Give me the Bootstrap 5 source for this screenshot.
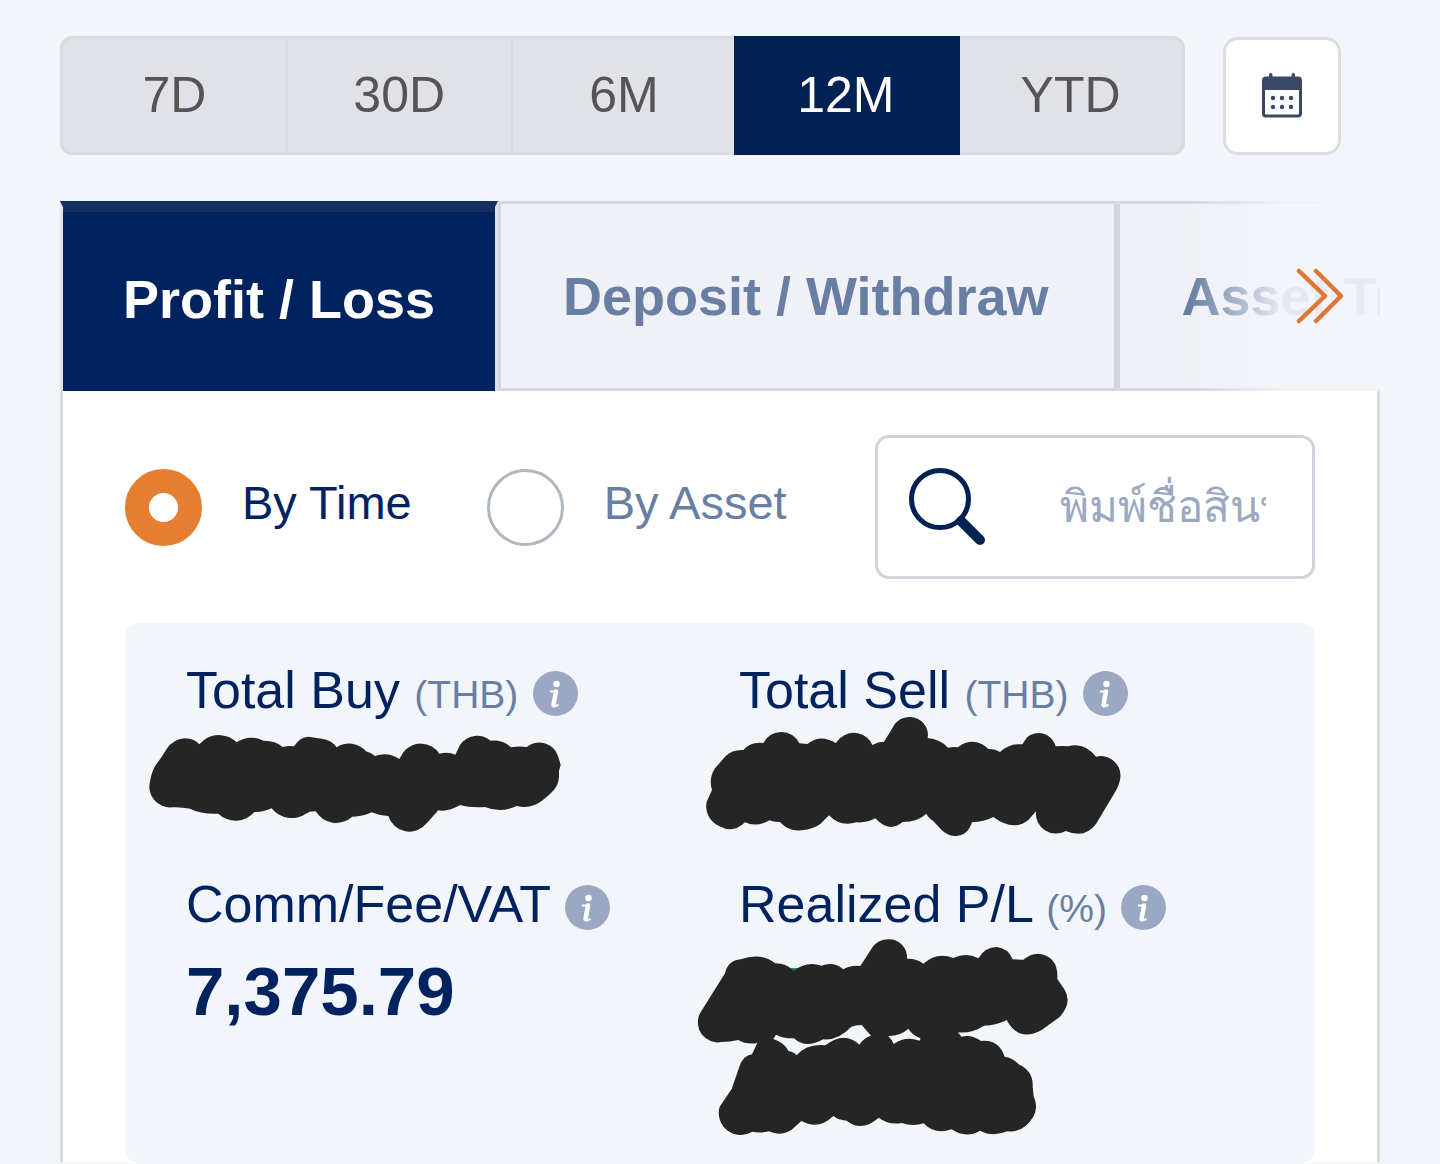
<!DOCTYPE html>
<html lang="en">
<head>
<meta charset="utf-8">
<meta name="viewport" content="width=device-width, initial-scale=1">
<title>Profit / Loss</title>
<link href="https://cdn.jsdelivr.net/npm/bootstrap@5.3.0/dist/css/bootstrap.min.css" rel="stylesheet">
<style>
:root { --navy: #00235f; --slate: #687fa3; --page: #f2f5fa; --line: #d2d7df; --orange: #e67e31; }
body { background: var(--page); color: var(--navy); font-family: "Liberation Sans", "Noto Sans", sans-serif; }
.page { padding: 36px 60px 0; }
.period-bar { gap: 38px; padding-right: 39px; margin-bottom: 46px; }
.period-group .btn { flex: 1 1 0; height: 119px; padding: 0 0 2px; font-size: 50px; line-height: 60px; color: #555; background: #e1e2e7; border: 3px solid #d9dbe0; border-radius: 12px; }
.period-group .btn:not(:first-child) { border-left-width: 0; }
.period-group .btn:has(+ .active) { border-right-width: 0; }
.period-group .btn.active { color: #fff; background: #002152; border-color: #002152; }
.btn-calendar { width: 118px; height: 118px; padding: 0; background: #fff; border: 3px solid #dcdee3; border-radius: 15px; }
.tab-strip { height: 190px; overflow: hidden; }
.tab-strip .nav-tabs { border: 0; height: 190px; }
.tab-strip .nav-link { height: 190px; margin: 0; padding: 0 65px 0 62px; font-size: 54px; line-height: 60px; font-weight: 700; white-space: nowrap; color: var(--slate); background: #f0f1f6; border: 3px solid var(--line); border-radius: 0; }
.tab-strip .nav-link.active { color: #fff; background: var(--navy); padding: 0 60px; border-top: 6px solid #142e60; border-bottom: 0; box-shadow: inset 0 5px 0 #142e60; }
.tab-fade { position: absolute; inset: 0 0 0 auto; width: 190px; padding: 0 36px 0 0; border: 0; background: linear-gradient(90deg, rgba(242,245,250,0) 0, rgba(242,245,250,.9) 48%, rgba(242,245,250,.92) 100%); }
.panel { background: #fff; border: 3px solid #dcdee0; border-width: 0 3px; padding: 44px 62px 0; }
.filter-row { margin-bottom: 44px; }
.choice { gap: 40px; }
.choice .form-check-input { width: 77px; height: 77px; margin: 0; flex: none; border: 3px solid #b0b7bf; box-shadow: none; }
.choice .form-check-input:checked { background: radial-gradient(circle, #fff 14px, var(--orange) 15px); border-color: var(--orange); }
.choice label { font-size: 47px; line-height: 54px; padding-bottom: 8px; white-space: nowrap; color: var(--slate); }
.choice input:checked + label { color: var(--navy); }
.choice-list { gap: 75px; }
.search-box { width: 440px; height: 144px; padding: 0 46px 0 29px; border: 3px solid #d0d3d7; border-radius: 14px; background: #fff; }
.search-box svg { flex: none; margin-right: 74px; }
.search-box input { flex: 1 1 0; min-width: 0; padding: 0; border: 0; outline: 0; background: transparent; font-size: 44px; line-height: 70px; height: 80px; color: var(--navy); }
.search-box input::placeholder { color: #9ca8c1; opacity: 1; }
.totals { background: var(--page); border-radius: 14px; padding: 37px 23px 45px 61px; row-gap: 54px; }
.total-name { font-size: 52px; line-height: 60px; height: 60px; font-weight: 400; margin: 0 0 16px; white-space: nowrap; }
.total-unit { font-size: 39px; color: var(--slate); }
.total-figure { font-size: 69px; line-height: 84px; font-weight: 700; margin: 0; }
.btn-info-dot { padding: 0; border: 0; background: none; line-height: 1; vertical-align: -8px; }
.btn-info-dot svg, .redaction { display: block; overflow: visible; }
</style>
</head>
<body>
<svg width="0" height="0" class="position-absolute" aria-hidden="true">
  <symbol id="info" viewBox="0 0 45 45">
    <circle cx="22.5" cy="22.5" r="22.5" fill="#9ba8c3"/>
    <circle cx="23.5" cy="13" r="3.200" fill="#fff"/>
    <path d="M17 20.500H23L20 33.500q-.3 2.500 1.800 1.700L25.500 34" fill="none" stroke="#fff" stroke-width="2"/>
    <path d="M23 20.500L20.500 34" fill="none" stroke="#fff" stroke-width="4.500" stroke-linecap="round"/>
  </symbol>
</svg>
<main class="page">
  <div class="period-bar d-flex align-items-center">
    <div class="btn-group period-group flex-fill" role="group" aria-label="Period">
      <button type="button" class="btn">7D</button>
      <button type="button" class="btn">30D</button>
      <button type="button" class="btn">6M</button>
      <button type="button" class="btn active" aria-pressed="true">12M</button>
      <button type="button" class="btn">YTD</button>
    </div>
    <button type="button" class="btn btn-calendar d-flex align-items-center justify-content-center flex-shrink-0" aria-label="Choose dates">
      <svg width="40" height="45" viewBox="0 0 40 45">
        <rect x="1.500" y="5" width="37" height="38" rx="2.500" fill="#fff" stroke="#3a4866" stroke-width="3"/>
        <path d="M1 17V6.500Q1 4 3.500 4H7V2q0-2 1.700-2T10.500 2V4h19V2q0-2 1.800-2T33 2V4h3.500Q39 4 39 6.500V17z" fill="#3a4866"/>
        <g fill="#3a4866"><circle cx="11" cy="25" r="2.200"/><circle cx="20" cy="25" r="2.200"/><circle cx="29" cy="25" r="2.200"/><circle cx="11" cy="34" r="2.200"/><circle cx="20" cy="34" r="2.200"/><circle cx="29" cy="34" r="2.200"/></g>
      </svg>
    </button>
  </div>

  <div class="tab-strip position-relative">
    <ul class="nav nav-tabs flex-nowrap">
      <li class="nav-item"><a class="nav-link active d-flex align-items-center" aria-current="page" href="#profit">Profit / Loss</a></li>
      <li class="nav-item"><a class="nav-link d-flex align-items-center" href="#deposit">Deposit / Withdraw</a></li>
      <li class="nav-item"><a class="nav-link d-flex align-items-center" href="#transfer">Asset Transfer</a></li>
    </ul>
    <button type="button" class="tab-fade d-flex align-items-center justify-content-end" aria-label="More tabs">
      <svg width="48" height="56" viewBox="0 0 48 56" fill="none" stroke="#e27533" stroke-width="4.500" stroke-linecap="round" stroke-linejoin="round"><path d="M3 3L29 28L3 53M20 3L45 28L20 53"/></svg>
    </button>
  </div>

  <section class="panel" id="profit">
    <div class="filter-row d-flex align-items-center justify-content-between">
      <div class="choice-list d-flex">
        <div class="choice d-flex align-items-center">
          <input class="form-check-input" type="radio" name="by" id="by-time" checked>
          <label for="by-time">By Time</label>
        </div>
        <div class="choice d-flex align-items-center">
          <input class="form-check-input" type="radio" name="by" id="by-asset">
          <label for="by-asset">By Asset</label>
        </div>
      </div>
      <div class="search-box d-flex align-items-center">
        <svg width="79" height="78" viewBox="0 0 79 78" fill="none" stroke="#002152" aria-hidden="true"><circle cx="33" cy="31" r="28.500" stroke-width="5"/><path d="M54 53L73 72" stroke-width="10" stroke-linecap="round"/></svg>
        <input type="text" lang="th" aria-label="ค้นหาสินทรัพย์" placeholder="พิมพ์ชื่อสินทรัพย์">
      </div>
    </div>

    <div class="totals row row-cols-2 gx-0 mx-0">
      <div class="col">
        <h2 class="total-name">Total Buy <span class="total-unit">(THB)</span> <button type="button" class="btn-info-dot" aria-label="About total buy"><svg width="45" height="45"><use href="#info"/></svg></button></h2>
        <svg class="redaction" width="440" height="84" viewBox="198 378 1320 252" fill="#252525" aria-label="Hidden"><path d="M112 458Q118 452 140 417Q158 388 195 385Q222 385 238 403L252 390A76 76 0 0 1 350 397A76 76 0 0 1 430 392Q465 391 488 411Q505 407 522 409Q538 382 565 380L605 386Q635 389 650 412A66 66 0 0 1 738 424Q752 428 765 438Q805 424 838 447L850 427A66 66 0 0 1 958 431Q985 424 1006 434L1020 405A62 62 0 0 1 1112 392Q1150 389 1173 412Q1197 407 1220 411A60 60 0 0 1 1307 423Q1316 440 1322 465L1317 482V500Q1316 530 1290 552L1268 571Q1235 598 1190 588Q1142 611 1095 591Q1050 594 1020 585Q985 606 955 601L920 640A66 66 0 0 1 805 618Q778 617 755 607Q724 621 697 620A72 72 0 0 1 587 604Q569 603 558 611A76 76 0 0 1 455 595Q430 607 403 606A74 74 0 0 1 295 611Q243 613 210 596Q180 590 155 592A62 62 0 0 1 90 515Q95 480 112 458Z"/></svg>
      </div>
      <div class="col">
        <h2 class="total-name">Total Sell <span class="total-unit">(THB)</span> <button type="button" class="btn-info-dot" aria-label="About total sell"><svg width="45" height="45"><use href="#info"/></svg></button></h2>
        <svg class="redaction" width="440" height="84" viewBox="177 378 1320 252" fill="#252525" aria-label="Hidden"><path d="M105 475L137 438Q157 418 190 420Q213 394 250 399A60 60 0 0 1 358 400L382 402Q420 370 467 399L480 385A60 60 0 0 1 577 405Q594 395 612 395L637 355C647 332 667 321 690 321A54 54 0 0 1 743 384Q780 387 804 413Q820 410 834 412A64 64 0 0 1 925 417Q944 415 960 426Q988 399 1027 403L1040 383A53 53 0 0 1 1127 409Q1149 407 1165 409Q1212 395 1248 440A59 59 0 0 1 1320 510Q1317 525 1309 540L1248 642Q1215 687 1157 663A60 60 0 0 1 1068 604L1045 630Q1000 666 940 621Q912 636 876 637Q862 680 823 678Q802 677 785 660L760 634Q743 620 739 611Q713 636 668 636Q627 670 586 625Q562 639 530 637Q480 652 447 616L422 641Q401 657 365 661Q325 665 300 636Q282 637 268 631Q230 653 195 637Q160 671 122 650A65 65 0 0 1 80 575L96 540Q85 506 105 475Z"/></svg>
      </div>
      <div class="col">
        <h2 class="total-name">Comm/Fee/VAT <button type="button" class="btn-info-dot" aria-label="About fees"><svg width="45" height="45"><use href="#info"/></svg></button></h2>
        <p class="total-figure">7,375.79</p>
      </div>
      <div class="col">
        <h2 class="total-name">Realized P/L <span class="total-unit">(%)</span> <button type="button" class="btn-info-dot" aria-label="About realized profit and loss"><svg width="45" height="45"><use href="#info"/></svg></button></h2>
        <svg class="redaction" width="440" height="168" viewBox="177 270 1320 504" fill="#252525" aria-label="Hidden"><path d="M325 324H370V345H325Z" fill="#139a76"/><path d="M60 460L135 340Q144 301 182 298Q243 276 285 310Q315 309 342 332Q380 302 424 317Q462 303 490 328Q510 315 541 318L574 267C586 247 605 238 627 238A54 54 0 0 1 681 296Q710 295 730 311Q771 274 820 294Q859 275 895 295Q915 261 950 261Q984 264 998 298L1030 299Q1050 281 1075 281Q1136 288 1132 357L1153 388Q1178 427 1140 470L1085 510Q1016 548 980 480Q952 496 912 497Q875 521 834 517L844 530Q875 523 903 543Q956 537 974 590Q998 593 1016 613Q1061 634 1058 680L1061 709Q1076 741 1060 770Q1030 819 982 814Q938 832 900 812Q858 837 815 808Q765 826 731 790Q700 801 665 789Q627 796 596 773Q545 818 500 782Q474 780 460 768Q416 811 364 783L335 809Q302 830 267 814Q242 820 217 815A66 66 0 0 1 119 740L155 687L178 620Q189 587 216 583L232 549Q200 555 175 540Q150 546 125 546A60 60 0 0 1 60 460ZM288 524L280 537Q315 549 326 574Q340 575 350 586Q381 550 436 556Q493 511 538 554Q552 533 573 527L545 495Q525 495 513 501Q475 542 430 538Q376 568 342 535Q309 536 288 524ZM685 506Q665 526 625 528Q637 540 641 552Q677 527 718 542Q725 535 718 533Q698 526 685 506Z" fill-rule="evenodd"/></svg>
      </div>
    </div>
  </section>
</main>
<script src="https://cdn.jsdelivr.net/npm/bootstrap@5.3.0/dist/js/bootstrap.bundle.min.js"></script>
</body>
</html>
